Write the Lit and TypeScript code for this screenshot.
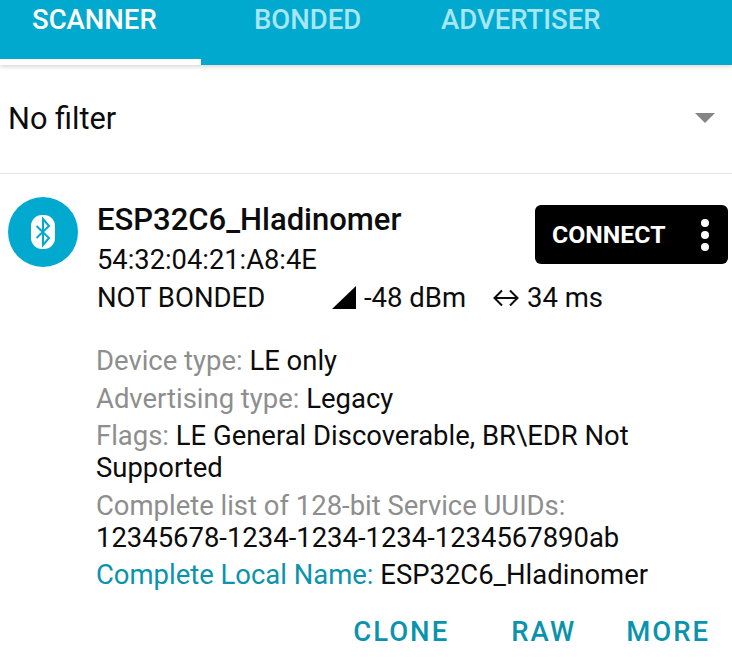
import { LitElement, html, css } from 'lit';
import { customElement } from 'lit/decorators.js';

@customElement('app-root')
export class AppRoot extends LitElement {
  static styles = css`
    :host {
      display: block;
      width: 732px;
      height: 659px;
      overflow: hidden;
      background: #fff;
      color: #0c0c0c;
      font-family: Roboto, sans-serif;
    }
    .tabs {
      display: grid;
      grid-template-columns: 201px 201px 330px;
      height: 65px;
      background: #02a9ce;
      box-shadow: 0 2px 4px rgba(0, 0, 0, 0.15);
      position: relative;
    }
    .tab {
      box-sizing: border-box;
      padding: 2px 0 0 32px;
      font-size: 27.5px;
      line-height: 36px;
      font-weight: 500;
      color: #a6e6f5;
    }
    .tab.second { padding-left: 53px; }
    .tab.third { padding-left: 39px; }
    .tab.active {
      color: #fff;
      border-bottom: 6px solid #fff;
    }
    .filter {
      box-sizing: border-box;
      height: 109px;
      display: flex;
      align-items: center;
      justify-content: space-between;
      padding: 0 17px 2px 8px;
      border-bottom: 1px solid #e4e4e4;
      font-size: 30.7px;
    }
    .arrow {
      width: 0;
      height: 0;
      border-left: 10px solid transparent;
      border-right: 10px solid transparent;
      border-top: 10px solid #858585;
    }
    .card {
      display: grid;
      grid-template-columns: 89px 1fr;
      padding: 23px 0 0 8px;
    }
    .avatar {
      width: 70px;
      height: 70px;
      border-radius: 50%;
      background: #02a9ce;
      display: flex;
      align-items: center;
      justify-content: center;
    }
    .head {
      position: relative;
    }
    .name {
      font-size: 31px;
      line-height: 46px;
      font-weight: 500;
    }
    .line {
      font-size: 27.3px;
      line-height: 35px;
    }
    .stats {
      display: flex;
      align-items: center;
      font-size: 27.5px;
      line-height: 37px;
      padding-top: 1px;
    }
    .bonded { width: 235px; }
    .rssi { display: flex; align-items: center; gap: 8px; width: 161px; }
    .interval { display: flex; align-items: center; gap: 8px; }
    .connect {
      position: absolute;
      top: 8px;
      right: 4px;
      width: 193px;
      height: 59px;
      box-sizing: border-box;
      border-radius: 6px;
      background: #000;
      color: #fff;
      display: flex;
      align-items: center;
      justify-content: space-between;
      padding: 0 19px 0 17px;
      font-size: 24.8px;
      font-weight: 700;
    }
    .dots { display: flex; flex-direction: column; gap: 4px; }
    .dots i { width: 8px; height: 8px; border-radius: 50%; background: #fff; }
    .details {
      grid-column: 2;
      margin: 29px 0 0 -1px;
      padding-right: 70px;
      font-size: 27.45px;
    }
    .details p { margin: 0 0 5.5px; line-height: 32px; }
    .details .label { color: #8e8e8e; }
    .details .accent { color: #0a93ad; }
    .actions {
      display: flex;
      justify-content: flex-end;
      gap: 50px;
      padding: 18px 22px 0 0;
      font-size: 27.5px;
      font-weight: 500;
      letter-spacing: 2px;
      color: #0a93ad;
    }
    .actions .clone { margin-right: 12px; }
  `;

  render() {
    return html`
      <div class="tabs">
        <div class="tab active">SCANNER</div>
        <div class="tab second">BONDED</div>
        <div class="tab third">ADVERTISER</div>
      </div>
      <div class="filter">
        <span>No filter</span>
        <span class="arrow"></span>
      </div>
      <div class="card">
        <div class="avatar">
          <svg width="24" height="34" viewBox="0 0 24 34">
            <rect x="0" y="0" width="24" height="34" rx="11" fill="#fff"></rect>
            <path d="M5.5 11 L18 23 L12 30 V4 L18 11 L5.5 23" fill="none" stroke="#02a9ce" stroke-width="2"></path>
          </svg>
        </div>
        <div class="head">
          <div class="name">ESP32C6_Hladinomer</div>
          <div class="line">54:32:04:21:A8:4E</div>
          <div class="line stats">
            <span class="bonded">NOT BONDED</span>
            <span class="rssi">
              <svg width="24" height="23" viewBox="0 0 24 23"><path d="M0 23 L24 0 V23 Z" fill="#000"></path></svg>
              -48 dBm
            </span>
            <span class="interval">
              <svg width="26" height="18" viewBox="0 0 26 18">
                <path d="M1 9 H25 M9 1.5 L1.5 9 L9 16.5 M17 1.5 L24.5 9 L17 16.5" fill="none" stroke="#0c0c0c" stroke-width="2"></path>
              </svg>
              34 ms
            </span>
          </div>
          <div class="connect">
            <span>CONNECT</span>
            <span class="dots"><i></i><i></i><i></i></span>
          </div>
        </div>
        <div class="details">
          <p><span class="label">Device type:</span> LE only</p>
          <p><span class="label">Advertising type:</span> Legacy</p>
          <p><span class="label">Flags:</span> LE General Discoverable, BR\\EDR Not Supported</p>
          <p><span class="label">Complete list of 128-bit Service UUIDs:</span> 12345678-1234-1234-1234-1234567890ab</p>
          <p><span class="accent">Complete Local Name:</span> ESP32C6_Hladinomer</p>
        </div>
      </div>
      <div class="actions">
        <span class="clone">CLONE</span>
        <span>RAW</span>
        <span>MORE</span>
      </div>
    `;
  }
}
